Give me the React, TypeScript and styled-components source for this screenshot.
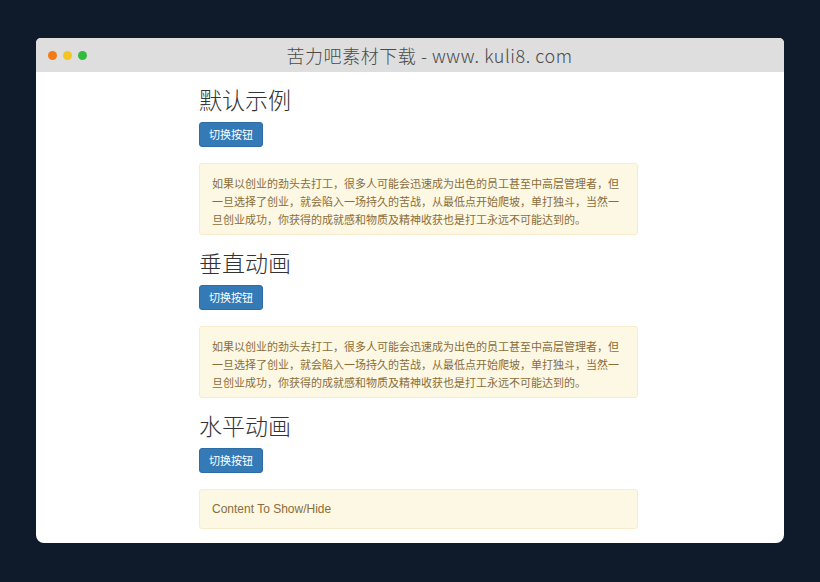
import React from "react";
import styled, { createGlobalStyle } from "styled-components";

const GlobalStyle = createGlobalStyle`
  html, body {
    margin: 0;
    padding: 0;
    background: #0f1b2a;
  }
  body {
    font-family: "Liberation Sans", "Noto Sans CJK SC", sans-serif;
  }
`;

const Stage = styled.div`
  width: 820px;
  height: 582px;
  padding: 38px 36px 0;
  box-sizing: border-box;
`;

const Window = styled.div`
  width: 748px;
  height: 505px;
  border-radius: 5px 5px 8px 8px;
  overflow: hidden;
  background: #ffffff;
  display: flex;
  flex-direction: column;
`;

const TitleBar = styled.div`
  height: 34px;
  flex: none;
  background: #dedede;
  display: flex;
  align-items: center;
  padding: 0 12px;
`;

const Dots = styled.div`
  display: flex;
  gap: 6px;
`;

const Dot = styled.span<{ $color: string }>`
  width: 9px;
  height: 9px;
  border-radius: 50%;
  background: ${(p) => p.$color};
`;

const Title = styled.div`
  flex: 1;
  text-align: center;
  font-family: "Noto Sans CJK SC", sans-serif;
  font-weight: 300;
  font-size: 18px;
  color: #4a4a4a;
  letter-spacing: 0.55px;
`;

const Content = styled.div`
  flex: 1;
  padding: 15px 0 0 163px;
`;

const Column = styled.div`
  width: 439px;
  display: flex;
  flex-direction: column;
`;

const Section = styled.section`
  display: flex;
  flex-direction: column;
  align-items: flex-start;
  & + & {
    margin-top: 15px;
  }
`;

const Heading = styled.h2`
  margin: 0 0 11px;
  font-family: "Noto Sans CJK SC", sans-serif;
  font-weight: 300;
  font-size: 23px;
  line-height: 24px;
  color: #333;
`;

const ToggleButton = styled.button`
  height: 25px;
  padding: 0 9px;
  border: 1px solid #2e6da4;
  border-radius: 3px;
  background: #337ab7;
  color: #fff;
  font-family: "Noto Sans CJK SC", sans-serif;
  font-size: 11px;
  line-height: 23px;
  cursor: pointer;
`;

const Alert = styled.div<{ $lang?: "zh" | "en" }>`
  align-self: stretch;
  margin-top: 16px;
  border: 1px solid #faebcc;
  border-radius: 3px;
  background: #fcf8e3;
  color: #8a6d3b;
  padding: ${(p) => (p.$lang === "en" ? "10px 12px" : "10px 12px 6px")};
  font-family: ${(p) =>
    p.$lang === "en"
      ? `"Liberation Sans", sans-serif`
      : `"Noto Sans CJK SC", sans-serif`};
  font-size: ${(p) => (p.$lang === "en" ? "12px" : "11px")};
  line-height: 18px;
`;

const story =
  "如果以创业的劲头去打工，很多人可能会迅速成为出色的员工甚至中高层管理者，但一旦选择了创业，就会陷入一场持久的苦战，从最低点开始爬坡，单打独斗，当然一旦创业成功，你获得的成就感和物质及精神收获也是打工永远不可能达到的。";

const sections = [
  { title: "默认示例", body: story, lang: "zh" as const },
  { title: "垂直动画", body: story, lang: "zh" as const },
  { title: "水平动画", body: "Content To Show/Hide", lang: "en" as const },
];

export default function App() {
  return (
    <>
      <GlobalStyle />
      <Stage>
        <Window>
          <TitleBar>
            <Dots>
              <Dot $color="#f57a12" />
              <Dot $color="#f3c522" />
              <Dot $color="#34bb3b" />
            </Dots>
            <Title>苦力吧素材下载 - www. kuli8. com</Title>
          </TitleBar>
          <Content>
            <Column>
              {sections.map((s) => (
                <Section key={s.title}>
                  <Heading>{s.title}</Heading>
                  <ToggleButton>切换按钮</ToggleButton>
                  <Alert $lang={s.lang}>{s.body}</Alert>
                </Section>
              ))}
            </Column>
          </Content>
        </Window>
      </Stage>
    </>
  );
}
